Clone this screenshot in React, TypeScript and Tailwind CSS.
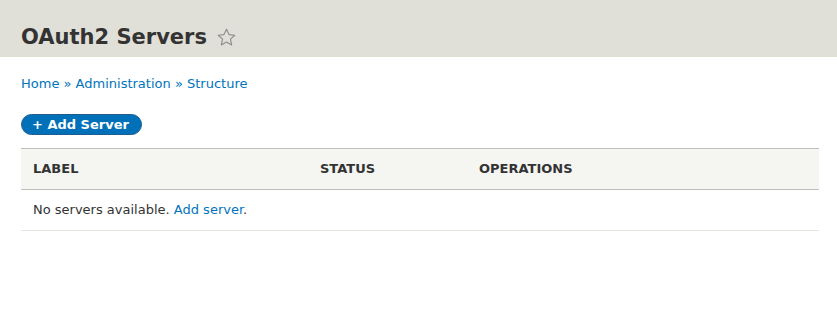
export default function App() {
  return (
    <div className="min-h-[316px] bg-white text-[#333] text-[13px]" style={{ fontFamily: '"DejaVu Sans", sans-serif' }}>
      <header className="bg-[#e0e0d8] h-[57px] px-[21px] flex items-center pt-[18px]">
        <h1 className="text-[21px] font-bold leading-none text-[#333] flex items-center">
          OAuth2 Servers
          <svg className="ml-[9px]" width="21" height="21" viewBox="0 0 24 24" fill="none" stroke="#8e8e8a" strokeWidth="1.3" strokeLinejoin="round">
            <path d="M12 2.5l2.9 6.2 6.6.7-5 4.5 1.4 6.6L12 17.2l-5.9 3.3 1.4-6.6-5-4.5 6.6-.7z" />
          </svg>
        </h1>
      </header>
      <main className="px-[21px] pr-[18px]">
        <nav className="pt-[18px] leading-[18px] text-[#0074bd]">
          <a href="#">Home</a>
          <span> » </span>
          <a href="#">Administration</a>
          <span> » </span>
          <a href="#">Structure</a>
        </nav>
        <div className="mt-[21px]">
          <button className="h-[21px] pl-[10px] pr-[12px] rounded-full bg-[#0071b8] border border-[#1e5c90] text-white font-bold text-[13px] leading-none">
            + Add Server
          </button>
        </div>
        <table className="mt-[13px] w-full border-collapse">
          <thead>
            <tr className="bg-[#f5f5f2] border-t border-b border-[#bfbfba] text-left uppercase text-[13px] font-bold h-[41px]">
              <th className="pl-3 w-[287px]">Label</th>
              <th className="pl-3 w-[159px]">Status</th>
              <th className="pl-3">Operations</th>
            </tr>
          </thead>
          <tbody>
            <tr className="border-b border-[#e6e4df] h-[41px]">
              <td colSpan={3} className="pl-3">
                No servers available. <a href="#" className="text-[#0074bd]">Add server</a>.
              </td>
            </tr>
          </tbody>
        </table>
      </main>
    </div>
  );
}
